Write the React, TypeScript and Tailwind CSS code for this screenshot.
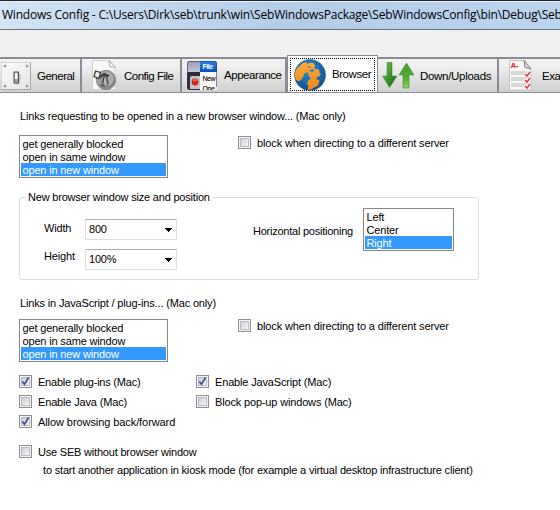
import type { ReactNode } from "react";

function CheckBox({ checked = false, className = "", children }: { checked?: boolean; className?: string; children: ReactNode }) {
  return (
    <div className={`flex h-[13px] ${className}`}>
      <div className="size-[13px] shrink-0 border border-[#8e8f8f] bg-[#f4f4f4] p-px">
        <div className="size-[9px] border border-[#b9bcc2] bg-linear-to-br from-[#c9cdd3] to-[#f8f8f8]">
          {checked && (
            <svg className="block" width="7" height="7" viewBox="0 0 7 7" overflow="visible">
              <path d="M0.3 3.5 L2.5 6.2 L6.6 -0.6" fill="none" stroke="#414f91" strokeWidth="1.7" />
            </svg>
          )}
        </div>
      </div>
      <span className="ml-1.5 leading-[15px]">{children}</span>
    </div>
  );
}

function ListBox({ items, className }: { items: string[]; className: string }) {
  return (
    <div className={`h-[43px] border border-[#828790] bg-white p-px ${className}`}>
      {items.map((item, i) => (
        <div key={item} className={`h-[13px] pl-[1.5px] leading-[14px] ${i === 2 ? "bg-[#3399ff] text-white" : ""}`}>
          {item}
        </div>
      ))}
    </div>
  );
}

function ComboBox({ value }: { value: string }) {
  return (
    <div className="flex h-[21px] w-[92px] items-center justify-between rounded-[1px] border border-[#dbdfe6] border-t-[#abadb3] bg-white pr-1 pl-[3px]">
      <span className="leading-[13px] tracking-[-0.2px]">{value}</span>
      <svg width="7" height="4" viewBox="0 0 7 4" shapeRendering="crispEdges">
        <path d="M0 0H7V1H6V2H5V3H4V4H3V3H2V2H1V1H0Z" fill="#000" />
      </svg>
    </div>
  );
}

function GeneralIcon() {
  return (
    <svg width="30" height="28" viewBox="0 0 30 28">
      <defs>
        <linearGradient id="plate" x2="1" y2="1">
          <stop stopColor="#fbfbfb" />
          <stop offset="1" stopColor="#e6e6e6" />
        </linearGradient>
      </defs>
      <rect x="0.5" y="0.5" width="29" height="27" fill="url(#plate)" stroke="#d6d6d6" />
      <path d="M0 27.5h29.5V0" fill="none" stroke="#a9a9a9" />
      {[4, 26].map((x) => [4, 24].map((y) => (
        <g key={`${x}-${y}`}>
          <circle cx={x} cy={y} r="1.5" fill="#b4b4b4" />
          <path d={`M${x - 1} ${y + 1}l2-2`} stroke="#757575" strokeWidth=".7" />
        </g>
      )))}
      <path d="M14 23l5-1 1-9-2-2z" fill="#c8c8c8" />
      <rect x="13" y="10" width="4.5" height="11" fill="#a9a9a9" stroke="#505050" strokeWidth="1" />
      <path d="M14 11h2.5v6H14z" fill="#fff" />
      <path d="M14 17h2.5v3.5H14z" fill="#999" />
    </svg>
  );
}

function ConfigIcon() {
  return (
    <svg width="25" height="31" viewBox="0 0 25 31">
      <defs>
        <linearGradient id="disc" x2="1" y2="1">
          <stop stopColor="#b5b5b5" />
          <stop offset="1" stopColor="#777" />
        </linearGradient>
      </defs>
      <path d="M.5.5H17l6 7v22H.5z" fill="#f8f8f8" stroke="#d0d0d0" />
      <path d="M17 .5l1 6.5h5z" fill="#fff" stroke="#888" strokeWidth=".7" />
      <circle cx="14" cy="20" r="9.7" fill="url(#disc)" stroke="#8a8a8a" />
      <path d="M15 13q6 1 6 7l-3 5-4-2z" fill="#aaa" stroke="#c5c5c5" strokeWidth=".7" />
      <path d="M7 25l3 2 3 .5-1-4z" fill="#666" />
      <path d="M3.5 11l5 1.5-1.5 6-5-2z" fill="#ececec" stroke="#3b3b3b" strokeWidth="1.3" />
      <path d="M8 17.5l4-3.5 5 2" fill="none" stroke="#3b3b3b" strokeWidth="2" />
      <path d="M12.5 15l-2 8M14 15l2 9" fill="none" stroke="#4a4a4a" strokeWidth="1.5" />
      <path d="M13 18v7" stroke="#ddd" strokeWidth=".8" />
    </svg>
  );
}

function AppearanceIcon() {
  return (
    <svg width="30" height="29" viewBox="0 0 30 29" fontFamily="Liberation Sans, sans-serif">
      <defs>
        <clipPath id="appClip"><rect width="30" height="29" rx="2.5" /></clipPath>
        <linearGradient id="menuBlue" x2="0" y2="1">
          <stop stopColor="#2585e8" />
          <stop offset="1" stopColor="#0753bd" />
        </linearGradient>
        <linearGradient id="lilac" x2="0" y2="1">
          <stop stopColor="#9c99b5" />
          <stop offset="1" stopColor="#c5c3d4" />
        </linearGradient>
      </defs>
      <g clipPath="url(#appClip)">
        <rect width="30" height="29" fill="#fbfbfb" />
        <rect width="13" height="11" fill="url(#lilac)" />
        <rect y="11" width="13" height="18" fill="#302a3d" />
        <path d="M3 28V17q0-2 2-2h8v13z" fill="#c2c2c8" />
        <circle cx="8" cy="21" r="3.2" fill="#e62114" stroke="#982018" strokeWidth=".5" />
        <path d="M6 19.5q2-1.5 4 0" stroke="#ff9a80" fill="none" />
        <rect x="13" width="17" height="11" fill="url(#menuBlue)" />
        <text x="15.5" y="8" fontSize="7" fontWeight="bold" fill="#fff">File</text>
        <text x="15.5" y="20" fontSize="7" fill="#111" stroke="#111" strokeWidth=".15">New</text>
        <text x="15.5" y="30" fontSize="7" fill="#111" stroke="#111" strokeWidth=".15">Ope</text>
      </g>
      <path d="M.4 26V2.5Q.4.4 2.5.4h25q2.1 0 2.1 2.1V26" fill="none" stroke="#3f3a55" strokeWidth=".7" />
    </svg>
  );
}

function GlobeIcon() {
  return (
    <svg width="32" height="32" viewBox="0 0 32 32">
      <defs>
        <radialGradient id="sea" cx=".45" cy=".35" r=".65">
          <stop stopColor="#2b93d2" />
          <stop offset=".6" stopColor="#176bb0" />
          <stop offset="1" stopColor="#174b83" />
        </radialGradient>
        <linearGradient id="land" x2="0" y2="1">
          <stop stopColor="#fbac3c" />
          <stop offset="1" stopColor="#ee861c" />
        </linearGradient>
      </defs>
      <circle cx="16" cy="16" r="15.6" fill="url(#sea)" stroke="#4c718e" strokeWidth=".6" />
      <path d="M8 4.5l4-1.5 1.5 2 3-1.5 3.5 1 1.5 3-2 1 2.5 2 3-.5.5 4 1.5 1-2 2.5-3 1 1 2 2.5 1-1.5 5-4 2-4 2.5-2.5-1 1-3-1.5-2.5 1-3 3-2-2-2.5-1.5-4-3 1.5-1.5 3.5-2 3-2 1.5-3.5-2L.8 14l1.7-4 3-3z" fill="url(#land)" />
      <path d="M15 12l3-2 2.5 1-2 2zM13 8.5l3-1.5.5 2z" fill="#2b7fbd" />
      <path d="M24 10l2.5-2 2 3-2 1z" fill="#1b67a6" />
    </svg>
  );
}

function ArrowsIcon() {
  return (
    <svg width="32" height="27" viewBox="0 0 32 27">
      <defs>
        <linearGradient id="down" x2="1" y2="1">
          <stop stopColor="#80cc45" />
          <stop offset=".5" stopColor="#3d962c" />
          <stop offset="1" stopColor="#17601c" />
        </linearGradient>
        <linearGradient id="up" x2="0" y2="1">
          <stop stopColor="#429e32" />
          <stop offset=".6" stopColor="#54aa33" />
          <stop offset="1" stopColor="#8bd34b" />
        </linearGradient>
      </defs>
      <path d="M5 .5h5V14h5L7.5 25.5.5 14H5z" fill="url(#down)" stroke="#347b31" strokeWidth=".5" />
      <path d="M24.5 1L32 13h-5v13h-6V13h-4z" fill="url(#up)" stroke="#347b31" strokeWidth=".5" />
    </svg>
  );
}

function ExamIcon() {
  return (
    <svg width="23" height="31" viewBox="0 0 23 31">
      <path d="M.5.5H15l7 9v20.5H.5z" fill="#fafafa" stroke="#c4c4c4" />
      <path d="M15 .5l1 7 6 1.5z" fill="#ddd" stroke="#666" strokeWidth=".8" />
      <text x="1.5" y="8" fontSize="8" fontWeight="bold" fill="#e51d20" fontFamily="Liberation Sans, sans-serif">A-</text>
      {[12, 18, 24].map((y) => (
        <g key={y} fill="none">
          <path d={`M2 ${y}h16M2 ${y + 2}h13`} stroke="#a5a5a5" strokeWidth=".8" />
          <path d={`M16 ${y + 2}l2 2 3-4`} stroke="#e2373a" strokeWidth="1.5" />
        </g>
      ))}
    </svg>
  );
}

function Tab({ icon, label, className }: { icon: ReactNode; label: string; className: string }) {
  return (
    <div className={`flex h-[35px] shrink-0 items-center border-t-2 border-r-2 border-t-[#8b8c95] border-r-[#8b8c95] bg-linear-to-b from-[#f1f1f1] from-20% via-[#e3e3e3] via-50% to-[#d0d0d0] text-[11.5px] ${className}`}>
      <div className="flex shrink-0">{icon}</div>
      <span className="pt-px whitespace-nowrap">{label}</span>
    </div>
  );
}

const linkPolicies = ["get generally blocked", "open in same window", "open in new window"];

export default function App() {
  return (
    <div className="h-[510px] w-[560px] overflow-hidden bg-white font-['Liberation_Sans',Arial,sans-serif] text-[11px] leading-[13px] tracking-[-0.16px] whitespace-nowrap text-black">
      <header className="h-[30px] overflow-hidden border-t border-b border-t-[#22242d] border-b-[#67757f] bg-linear-to-r from-[#d3e4f5] via-[#b3cde9] to-[#bad3ee] pt-[5px] pl-0.5 shadow-[inset_0_1px_0_#e6f1fc]">
        <span className="font-['Open_Sans','Noto_Sans',sans-serif] text-[12px] leading-[18px] tracking-[-0.21px]">
          Windows Config - C:\Users\Dirk\seb\trunk\win\SebWindowsPackage\SebWindowsConfig\bin\Debug\SebWindowsConfig.exe
        </span>
      </header>

      <nav className="flex h-[63px] w-[640px] items-end border-b border-[#8b8c95] bg-[#f0f0f0]">
        <Tab className="w-[82px] gap-1.5 pl-px tracking-[-0.5px]" icon={<GeneralIcon />} label="General" />
        <Tab className="w-[100px] gap-[7px] pl-[10px] tracking-[-0.5px]" icon={<ConfigIcon />} label="Config File" />
        <Tab className="w-[105px] gap-[7px] border-r-0 pb-px pl-[5px] tracking-[-0.45px]" icon={<AppearanceIcon />} label="Appearance" />
        <div className="h-[37px] w-[91px] shrink-0 border border-b-0 border-[#8b8c95] bg-white px-0.5 pt-0.5 pb-px text-[11.5px] tracking-[-0.45px]">
          <div className="flex h-[33px] items-center gap-1.5 border border-dotted border-black pl-[3px]">
            <GlobeIcon />
            <span>Browser</span>
          </div>
        </div>
        <Tab className="w-[121px] gap-1.5 pl-1 tracking-[-0.3px]" icon={<ArrowsIcon />} label="Down/Uploads" />
        <Tab className="w-[110px] gap-[10px] pl-[10px] tracking-[-0.4px]" icon={<ExamIcon />} label="Exam" />
      </nav>

      <main className="pl-[19px]">
        <p className="pt-[17px] pl-px">Links requesting to be opened in a new browser window... (Mac only)</p>
        <div className="mt-3 flex">
          <ListBox items={linkPolicies} className="w-[149px]" />
          <CheckBox className="mt-px ml-[70px] tracking-[-0.13px]">block when directing to a different server</CheckBox>
        </div>

        <fieldset className="mt-[13px] h-[89px] w-[460px] rounded-[3px] border border-[#d5dfe5]">
          <legend className="ml-[6px] h-[13px] px-0.5 tracking-[-0.2px]">New browser window size and position</legend>
          <div className="flex pl-6">
            <div className="flex w-[41px] flex-col gap-[15px] pt-[18px]">
              <span>Width</span>
              <span>Height</span>
            </div>
            <div className="flex flex-col gap-[9px] pt-[15px]">
              <ComboBox value="800" />
              <ComboBox value="100%" />
            </div>
            <span className="ml-[76px] w-[110px] pt-[21px] tracking-[-0.24px]">Horizontal positioning</span>
            <ListBox items={["Left", "Center", "Right"]} className="mt-1 w-[91px]" />
          </div>
        </fieldset>

        <p className="mt-[17px] pl-px">Links in JavaScript / plug-ins... (Mac only)</p>
        <div className="mt-[9px] flex">
          <ListBox items={linkPolicies} className="w-[149px]" />
          <CheckBox className="ml-[70px] tracking-[-0.13px]">block when directing to a different server</CheckBox>
        </div>

        <div className="mt-[13px] grid grid-cols-[177px_1fr] gap-y-[7px]">
          <CheckBox checked className="tracking-[-0.22px]">Enable plug-ins (Mac)</CheckBox>
          <CheckBox checked>Enable JavaScript (Mac)</CheckBox>
          <CheckBox>Enable Java (Mac)</CheckBox>
          <CheckBox>Block pop-up windows (Mac)</CheckBox>
          <CheckBox checked className="tracking-[-0.08px]">Allow browsing back/forward</CheckBox>
        </div>
        <CheckBox className="mt-[17px] tracking-[-0.2px]">Use SEB without browser window</CheckBox>
        <p className="mt-[6px] pl-6 tracking-[-0.18px]">to start another application in kiosk mode (for example a virtual desktop infrastructure client)</p>
      </main>
    </div>
  );
}
